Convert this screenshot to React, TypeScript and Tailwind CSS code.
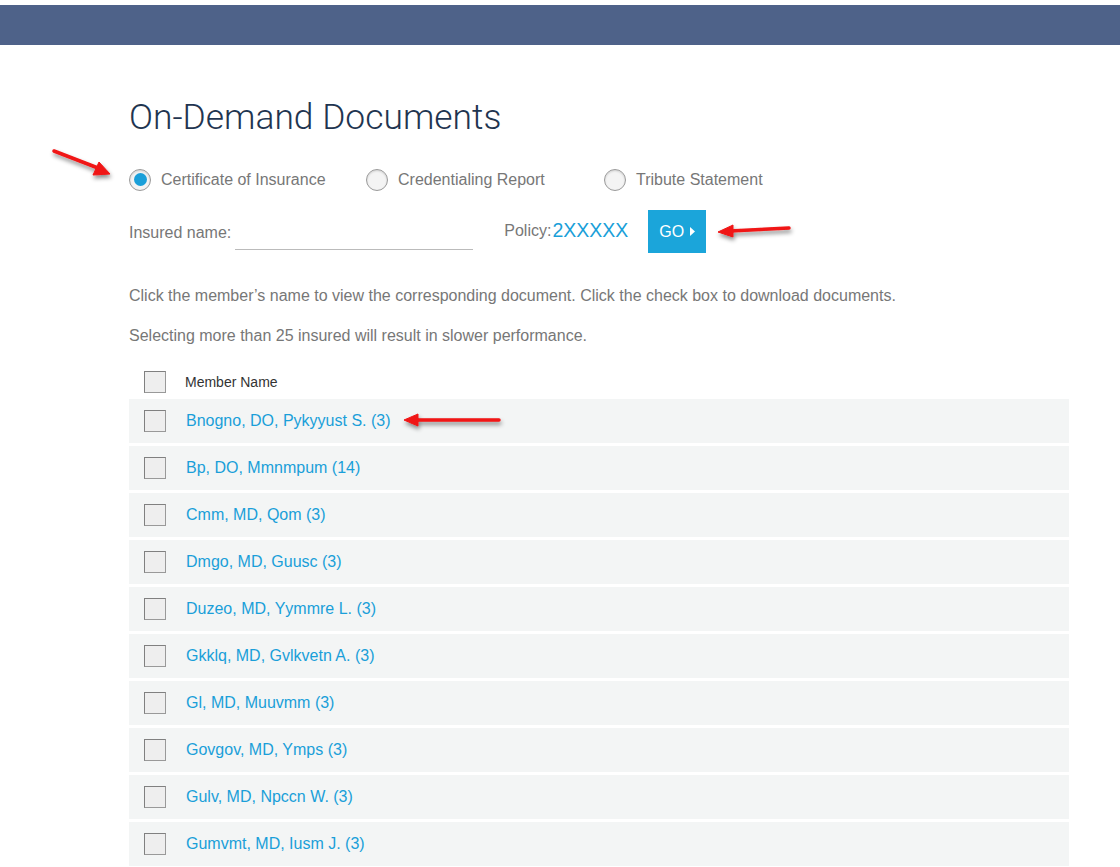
import { useState } from "react";

const members = [
  "Bnogno, DO, Pykyyust S. (3)",
  "Bp, DO, Mmnmpum (14)",
  "Cmm, MD, Qom (3)",
  "Dmgo, MD, Guusc (3)",
  "Duzeo, MD, Yymmre L. (3)",
  "Gkklq, MD, Gvlkvetn A. (3)",
  "Gl, MD, Muuvmm (3)",
  "Govgov, MD, Ymps (3)",
  "Gulv, MD, Npccn W. (3)",
  "Gumvmt, MD, Iusm J. (3)",
];

const docTypes = ["Certificate of Insurance", "Credentialing Report", "Tribute Statement"];

function Radio({ checked, label, onClick }: { checked: boolean; label: string; onClick: () => void }) {
  return (
    <button onClick={onClick} className="flex items-center gap-[10px] text-[16px] text-[#777]">
      <span className="flex h-[22px] w-[22px] items-center justify-center rounded-full border-[1.5px] border-[#9a9a9a] bg-[#f4f4f4] shadow-[inset_0_1px_2px_rgba(0,0,0,0.15)]">
        {checked && <span className="h-[13px] w-[13px] rounded-full bg-[#1a9fd9]" />}
      </span>
      {label}
    </button>
  );
}

function Box({ checked, onClick }: { checked: boolean; onClick: () => void }) {
  return (
    <button
      onClick={onClick}
      className="flex h-[22px] w-[22px] items-center justify-center border border-[#999] border-t-[#808080] border-l-[#808080] bg-[#eeeeee] text-[13px] leading-none text-[#1a9fd9]"
    >
      {checked ? "✓" : ""}
    </button>
  );
}

function Arrows() {
  return (
    <svg className="pointer-events-none absolute left-0 top-0" width="1120" height="867">
      <defs>
        <filter id="sh" x="-20%" y="-50%" width="140%" height="200%">
          <feDropShadow dx="1" dy="3" stdDeviation="2" floodColor="#000" floodOpacity="0.45" />
        </filter>
      </defs>
      <g filter="url(#sh)" fill="#f01414" stroke="#f01414">
        <line x1="54" y1="151" x2="98" y2="168" strokeWidth="3.5" strokeLinecap="round" />
        <polygon points="110,174 93,175 99,162" strokeWidth="1" strokeLinejoin="round" />
        <line x1="789" y1="228" x2="730" y2="231" strokeWidth="3.5" strokeLinecap="round" />
        <polygon points="718,232 733,225 733,237" strokeWidth="1" strokeLinejoin="round" />
        <line x1="499" y1="420" x2="416" y2="420" strokeWidth="3.5" strokeLinecap="round" />
        <polygon points="404,420 418,414 418,426" strokeWidth="1" strokeLinejoin="round" />
      </g>
    </svg>
  );
}

export default function App() {
  const [doc, setDoc] = useState(0);
  const [checked, setChecked] = useState<boolean[]>(members.map(() => false));
  const [name, setName] = useState("");
  const all = checked.every(Boolean);

  return (
    <div className="relative min-h-[867px] bg-white pt-[5px] font-['Liberation_Sans',Arial,sans-serif]">
      <div className="h-10 bg-[#4e6289]" />
      <div className="pl-[129px] pr-[51px]">
        <h1 className="mt-[52px] font-['Roboto',sans-serif] text-[35.4px] font-light leading-[40px] text-[#1f3550]">
          On-Demand Documents
        </h1>
        <div className="mt-[31px] flex h-[23px] items-center">
          {docTypes.map((d, i) => (
            <div key={d} className={i === 0 ? "w-[237px]" : i === 1 ? "w-[238px]" : ""}>
              <Radio checked={doc === i} label={d} onClick={() => setDoc(i)} />
            </div>
          ))}
        </div>
        <div className="mt-[19px] flex h-[43px] items-center text-[16px] text-[#777]">
          <span className="mt-[2px]">Insured name:</span>
          <input
            value={name}
            onChange={(e) => setName(e.target.value)}
            className="ml-[4px] mt-[6px] h-[30px] w-[238px] border-b border-[#bbb] text-[16px] text-[#333] outline-none"
          />
          <span className="ml-[31px] mt-[-2px]">Policy:</span>
          <span className="ml-[1px] mt-[-2px] text-[19.5px] text-[#1a9fd9]">2XXXXX</span>
          <button className="ml-[20px] flex h-[43px] w-[58px] items-center justify-center gap-[6px] bg-[#1ba5da] text-[16px] text-white">
            GO
            <svg width="5" height="9" viewBox="0 0 5 9">
              <polygon points="0,0 5,4.5 0,9" fill="#fff" />
            </svg>
          </button>
        </div>
        <p className="mt-[33px] text-[16px] leading-[20px] text-[#777]">
          Click the member’s name to view the corresponding document. Click the check box to download documents.
        </p>
        <p className="mt-[20px] text-[16px] leading-[20px] text-[#777]">
          Selecting more than 25 insured will result in slower performance.
        </p>
        <div className="mt-[25px] flex h-[22px] items-center pl-[15px]">
          <Box checked={all} onClick={() => setChecked(members.map(() => !all))} />
          <span className="ml-[19px] text-[14px] text-[#333]">Member Name</span>
        </div>
        <div className="mt-[6px] flex flex-col gap-[3px]">
          {members.map((m, i) => (
            <div key={m} className="flex h-[44px] items-center bg-[#f3f5f5] pl-[15px]">
              <Box
                checked={checked[i]}
                onClick={() => setChecked(checked.map((c, j) => (j === i ? !c : c)))}
              />
              <a href="#" className="ml-[20px] text-[16px] text-[#1a9fd9]">
                {m}
              </a>
            </div>
          ))}
        </div>
      </div>
      <Arrows />
    </div>
  );
}
